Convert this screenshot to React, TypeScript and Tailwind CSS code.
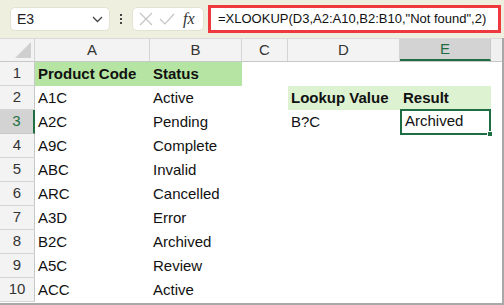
import React from "react";

const cols = [
  { key: "A", w: 115 },
  { key: "B", w: 92 },
  { key: "C", w: 46 },
  { key: "D", w: 112 },
  { key: "E", w: 91 },
];

const dataA = ["Product Code", "A1C", "A2C", "A9C", "ABC", "ARC", "A3D", "B2C", "A5C", "ACC"];
const dataB = ["Status", "Active", "Pending", "Complete", "Invalid", "Cancelled", "Error", "Archived", "Review", "Active"];

export default function App() {
  const font = { fontFamily: '"Liberation Sans", Arial, sans-serif' };
  return (
    <div className="w-[504px] h-[305px] overflow-hidden bg-white relative" style={font}>
      {/* toolbar */}
      <div className="h-[38px] bg-[#eeefdf] flex items-center">
        <div className="ml-[10px] w-[100px] h-[24px] bg-white rounded-[5px] border border-[#e2e3d3] flex items-center justify-between pl-[6px] pr-[6px]">
          <span className="text-[14px] text-[#222]">E3</span>
          <svg width="11" height="7" viewBox="0 0 11 7"><path d="M1 1 L5.5 5.5 L10 1" fill="none" stroke="#444" strokeWidth="1.3" /></svg>
        </div>
        <div className="w-[22px] flex flex-col items-center gap-[2px]">
          <div className="w-[2px] h-[2px] bg-[#444]" />
          <div className="w-[2px] h-[2px] bg-[#444]" />
          <div className="w-[2px] h-[2px] bg-[#444]" />
        </div>
        <div className="w-[72px] h-[24px] bg-white rounded-[5px] border border-[#e2e3d3] flex items-center pl-[6px] pr-[4px] gap-[6px]">
          <svg width="14" height="14" viewBox="0 0 14 14"><path d="M1 1 L13 13 M13 1 L1 13" stroke="#c4c4c4" strokeWidth="1.2" /></svg>
          <svg width="16" height="14" viewBox="0 0 16 14"><path d="M1 7 L6 12 L15 2" fill="none" stroke="#c4c4c4" strokeWidth="1.2" /></svg>
          <span className="text-[16px] italic text-[#333] ml-[2px]" style={{ fontFamily: '"Liberation Serif", serif' }}>fx</span>
        </div>
        <div className="ml-[4px] w-[293px] h-[28px] border-[3px] border-[#ee3a3f] bg-white flex items-center pl-[7px]">
          <span className="text-[13px] text-[#111] whitespace-nowrap">=XLOOKUP(D3,A2:A10,B2:B10,"Not found",2)</span>
        </div>
      </div>
      {/* column headers */}
      <div className="flex h-[24px] bg-[#f3f3f3] border-b border-[#c8c8c8] border-t border-t-[#dadada]">
        <div className="w-[35px] border-r border-[#d4d4d4] relative">
          <div className="absolute right-[3px] bottom-[3px] w-0 h-0 border-l-[16px] border-l-transparent border-b-[16px] border-b-[#cfcfcf]" />
        </div>
        {cols.map((c) => (
          <div
            key={c.key}
            style={{ width: c.w }}
            className={
              c.key === "E"
                ? "flex items-center justify-center text-[15px] text-[#1f6e43] bg-[#d3d3d3] border-b-[2px] border-[#1f6e43] border-r border-r-[#c8c8c8]"
                : "flex items-center justify-center text-[15px] text-[#333] border-r border-[#d4d4d4]"
            }
          >
            {c.key}
          </div>
        ))}
        <div className="flex-1 bg-[#f0f0f0]" />
      </div>
      {/* rows */}
      <div className="flex flex-col">
        {dataA.map((a, i) => {
          const r = i + 1;
          const bold = r === 1;
          return (
            <div key={r} className="flex h-[24px] text-[15px] text-[#111]">
              <div
                className={
                  r === 3
                    ? "w-[35px] flex items-center justify-center bg-[#d3d3d3] text-[#1f6e43] border-r-[2px] border-[#1f6e43] border-b border-b-[#c8c8c8]"
                    : "w-[35px] flex items-center justify-center bg-[#f3f3f3] text-[#333] border-r border-[#c8c8c8] border-b border-b-[#d4d4d4]"
                }
              >
                {r}
              </div>
              <div className={"w-[115px] flex items-center pl-[3px] " + (bold ? "bg-[#b6e5a3] font-bold" : "")}>{a}</div>
              <div className={"w-[92px] flex items-center pl-[3px] " + (bold ? "bg-[#b6e5a3] font-bold" : "")}>{dataB[i]}</div>
              <div className="w-[46px]" />
              <div className={"w-[112px] flex items-center pl-[3px] " + (r === 2 ? "bg-[#dcf2d1] font-bold" : "")}>
                {r === 2 ? "Lookup Value" : r === 3 ? "B?C" : ""}
              </div>
              <div className={"w-[91px] flex items-center " + (r === 2 ? "bg-[#dcf2d1] font-bold pl-[3px]" : "pl-[3px]")}>
                {r === 2 ? "Result" : ""}
                {r === 3 && (
                  <div className="relative w-[91px] h-[26px] -ml-[3px] -mt-[1px] border-[2px] border-[#1f6e43] flex items-center pl-[3px]">
                    Archived
                    <div className="absolute -right-[4px] -bottom-[4px] w-[6px] h-[6px] bg-[#1f6e43] border border-white" />
                  </div>
                )}
              </div>
              <div className="flex-1" />
            </div>
          );
        })}
      </div>
      <div className="absolute right-0 top-[38px] bottom-0 w-[2px] bg-[#a8a8a8]" />
      <div className="absolute left-0 right-0 bottom-0 h-[2px] bg-[#a8a8a8]" />
    </div>
  );
}
